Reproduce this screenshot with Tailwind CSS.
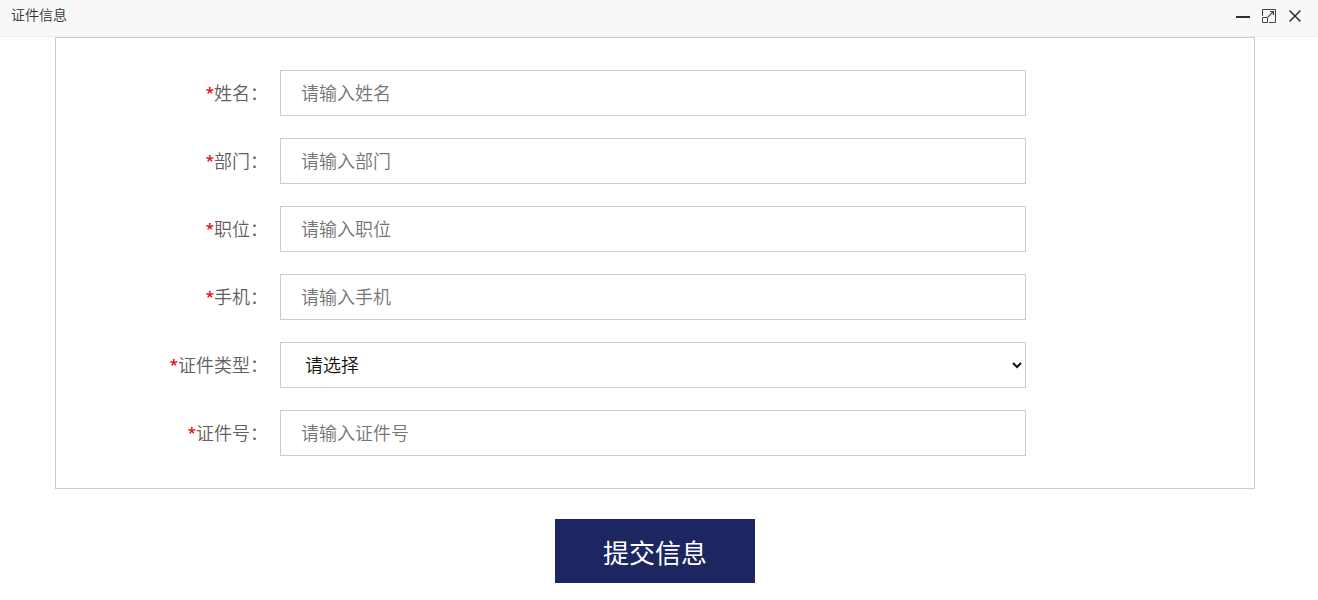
<!DOCTYPE html>
<html lang="zh-CN">
<head>
<meta charset="utf-8">
<title>证件信息</title>
<script src="https://cdn.jsdelivr.net/npm/@tailwindcss/browser@4"></script>
</head>
<body class="h-[600px] overflow-hidden bg-white font-['Liberation_Sans','Noto_Sans_CJK_SC',sans-serif]">
<header class="flex h-[37px] items-start justify-between border-b border-[#eee] bg-[#f8f8f8] pl-[11px] pr-[15px]">
  <h1 class="mt-[5px] text-[14px] leading-5 font-[350] text-[#333]">证件信息</h1>
  <div class="mt-2 flex gap-[10px] text-[#2e2d3c]">
    <svg class="size-4" viewBox="0 0 16 16" fill="currentColor"><path d="M1 8h14v2H1z"/></svg>
    <svg class="size-4" viewBox="0 0 16 16" fill="none" stroke="#444" stroke-width="1"><path d="M1.500 8V1.500h13v13H8M1.500 9.500h5v5h-5z"/><path stroke-width="1.200" d="M7 9l5.500-5.500M9 3.500h3.500v3.500"/></svg>
    <svg class="size-4" viewBox="0 0 16 16" fill="none" stroke="currentColor" stroke-width="1.5"><path d="M2.500 2.500l11 11M13.500 2.500l-11 11"/></svg>
  </div>
</header>
<form class="ml-[55px] w-[1200px]">
  <div class="flex flex-col gap-[22px] border border-[#ccc] py-8 text-[18px] font-[350] text-[#606060]">
    <div class="flex h-[46px] items-center gap-3"><label class="w-[212px] pt-0.5 text-right"><span class="relative -top-[2px] font-['Noto_Sans'] text-[15px] font-medium leading-none text-[#e60000]">*</span>姓名：</label><input class="h-[46px] w-[746px] border border-[#ccc] pt-0.5 px-5 placeholder:text-[#757575] placeholder:opacity-100" placeholder="请输入姓名"></div>
    <div class="flex h-[46px] items-center gap-3"><label class="w-[212px] pt-0.5 text-right"><span class="relative -top-[2px] font-['Noto_Sans'] text-[15px] font-medium leading-none text-[#e60000]">*</span>部门：</label><input class="h-[46px] w-[746px] border border-[#ccc] pt-0.5 px-5 placeholder:text-[#757575] placeholder:opacity-100" placeholder="请输入部门"></div>
    <div class="flex h-[46px] items-center gap-3"><label class="w-[212px] pt-0.5 text-right"><span class="relative -top-[2px] font-['Noto_Sans'] text-[15px] font-medium leading-none text-[#e60000]">*</span>职位：</label><input class="h-[46px] w-[746px] border border-[#ccc] pt-0.5 px-5 placeholder:text-[#757575] placeholder:opacity-100" placeholder="请输入职位"></div>
    <div class="flex h-[46px] items-center gap-3"><label class="w-[212px] pt-0.5 text-right"><span class="relative -top-[2px] font-['Noto_Sans'] text-[15px] font-medium leading-none text-[#e60000]">*</span>手机：</label><input class="h-[46px] w-[746px] border border-[#ccc] pt-0.5 px-5 placeholder:text-[#757575] placeholder:opacity-100" placeholder="请输入手机"></div>
    <div class="flex h-[46px] items-center gap-3"><label class="w-[212px] pt-0.5 text-right"><span class="relative -top-[2px] font-['Noto_Sans'] text-[15px] font-medium leading-none text-[#e60000]">*</span>证件类型：</label><select class="h-[46px] w-[746px] border border-[#ccc] bg-white pt-0.5 pl-5 text-[#111]"><option>请选择</option></select></div>
    <div class="flex h-[46px] items-center gap-3"><label class="w-[212px] pt-0.5 text-right"><span class="relative -top-[2px] font-['Noto_Sans'] text-[15px] font-medium leading-none text-[#e60000]">*</span>证件号：</label><input class="h-[46px] w-[746px] border border-[#ccc] pt-0.5 px-5 placeholder:text-[#757575] placeholder:opacity-100" placeholder="请输入证件号"></div>
  </div>
  <button type="button" class="mx-auto mt-[30px] flex h-16 w-[200px] items-center justify-center bg-[#1d2661] pt-1.5 text-[26px] text-white">提交信息</button>
</form>
</body>
</html>
